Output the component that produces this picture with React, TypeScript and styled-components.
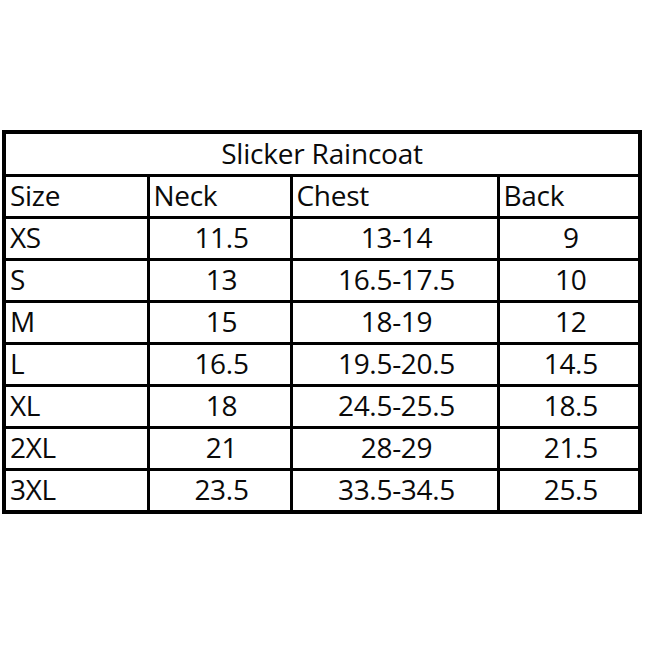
import React from "react";
import styled, { createGlobalStyle } from "styled-components";

const GlobalStyle = createGlobalStyle`
  html, body {
    margin: 0;
    padding: 0;
    background: #ffffff;
  }
  body {
    width: 645px;
    height: 645px;
    font-family: "Open Sans", "Noto Sans", sans-serif;
  }
`;

const Page = styled.div`
  padding: 130px 0 0 2px;
`;

const Table = styled.table`
  border-collapse: collapse;
  border: 4px solid #000;
  table-layout: fixed;
  width: 640px;
  color: #0a0a0a;
`;

const Cell = styled.td<{ $center?: boolean }>`
  border: 3px solid #000;
  height: 36px;
  padding: 0 0 2px 4px;
  font-size: 28px;
  line-height: 37px;
  letter-spacing: -0.3px;
  text-align: ${(p) => (p.$center ? "center" : "left")};
  white-space: nowrap;
`;

const Title = styled.td`
  border: 3px solid #000;
  height: 37px;
  padding: 0 0 2px;
  font-size: 28px;
  line-height: 38px;
  letter-spacing: -0.2px;
  text-align: center;
`;

const rows = [
  ["XS", "11.5", "13-14", "9"],
  ["S", "13", "16.5-17.5", "10"],
  ["M", "15", "18-19", "12"],
  ["L", "16.5", "19.5-20.5", "14.5"],
  ["XL", "18", "24.5-25.5", "18.5"],
  ["2XL", "21", "28-29", "21.5"],
  ["3XL", "23.5", "33.5-34.5", "25.5"],
];

export default function App() {
  return (
    <Page>
      <GlobalStyle />
      <Table>
        <colgroup>
          <col style={{ width: 144 }} />
          <col style={{ width: 143 }} />
          <col style={{ width: 207 }} />
          <col style={{ width: 142 }} />
        </colgroup>
        <tbody>
          <tr>
            <Title colSpan={4}>Slicker Raincoat</Title>
          </tr>
          <tr>
            <Cell>Size</Cell>
            <Cell>Neck</Cell>
            <Cell>Chest</Cell>
            <Cell>Back</Cell>
          </tr>
          {rows.map((r) => (
            <tr key={r[0]}>
              <Cell>{r[0]}</Cell>
              <Cell $center>{r[1]}</Cell>
              <Cell $center>{r[2]}</Cell>
              <Cell $center>{r[3]}</Cell>
            </tr>
          ))}
        </tbody>
      </Table>
    </Page>
  );
}
